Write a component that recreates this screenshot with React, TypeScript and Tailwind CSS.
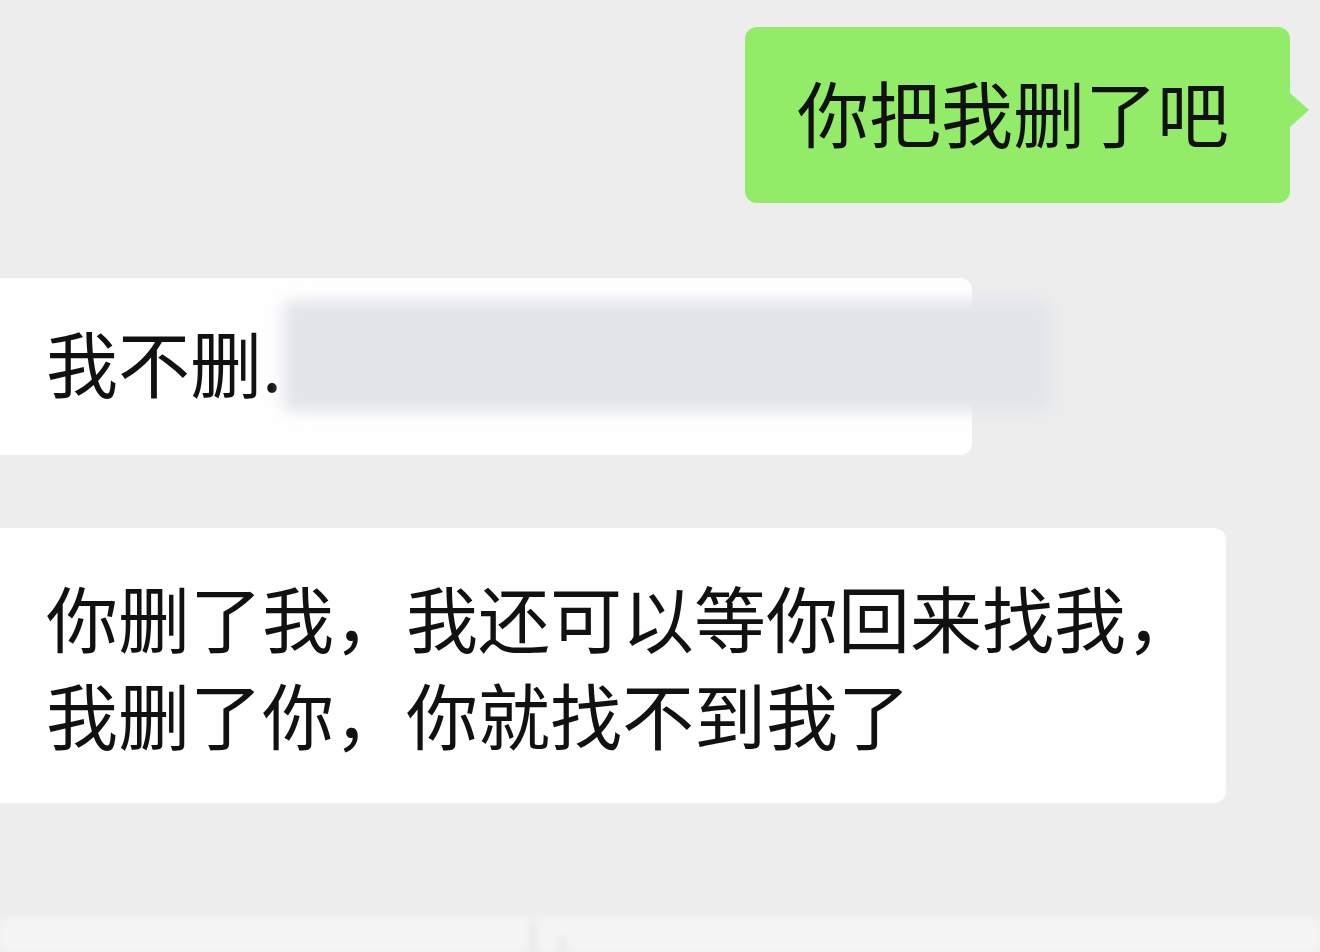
const cjk = "font-['Noto_Sans_CJK_SC','Noto_Sans',sans-serif]";

export default function App() {
  return (
    <div className={`flex h-[952px] w-[1320px] flex-col overflow-hidden bg-[#ededed] pt-[27px] ${cjk} text-[#111]`}>
      {/* outgoing message */}
      <div className="flex justify-end pr-[30px]">
        <div className="relative flex h-[176px] w-[545px] items-center rounded-[12px] bg-[#93ec68] pb-[8px] pl-[52px] text-[72px] leading-none">
          你把我删了吧
          <span className="absolute right-[-19px] top-[66px] h-0 w-0 border-y-[17px] border-l-[19px] border-y-transparent border-l-[#93ec68]" />
        </div>
      </div>

      {/* reply, partly covered */}
      <div className="relative mt-[75px] flex h-[177px] w-[972px] items-center rounded-r-[12px] bg-[#fefefe] pb-[12px] pl-[46px] text-[72px] leading-none">
        我不删.
        <span className="absolute left-[283px] top-[22px] h-[112px] w-[770px] rounded-[10px] bg-[#e3e5ea] blur-[7px]" />
      </div>

      {/* second reply */}
      <div className="mt-[73px] w-[1226px] rounded-r-[12px] bg-[#fefefe] pb-[42px] pl-[46px] pt-[39px] text-[72px] leading-[97px]">
        <p>你删了我，我还可以等你回来找我，</p>
        <p>我删了你，你就找不到我了</p>
      </div>

      {/* faint footer */}
      <div className="mt-auto flex h-[34px] items-end gap-[24px] bg-[#f4f4f4] pl-[530px] blur-[3px]">
        <span className="h-[30px] w-[6px] rounded bg-[#e6e6e6]" />
        <span className="h-[16px] w-[5px] rounded bg-[#e8e8e8]" />
      </div>
    </div>
  );
}
